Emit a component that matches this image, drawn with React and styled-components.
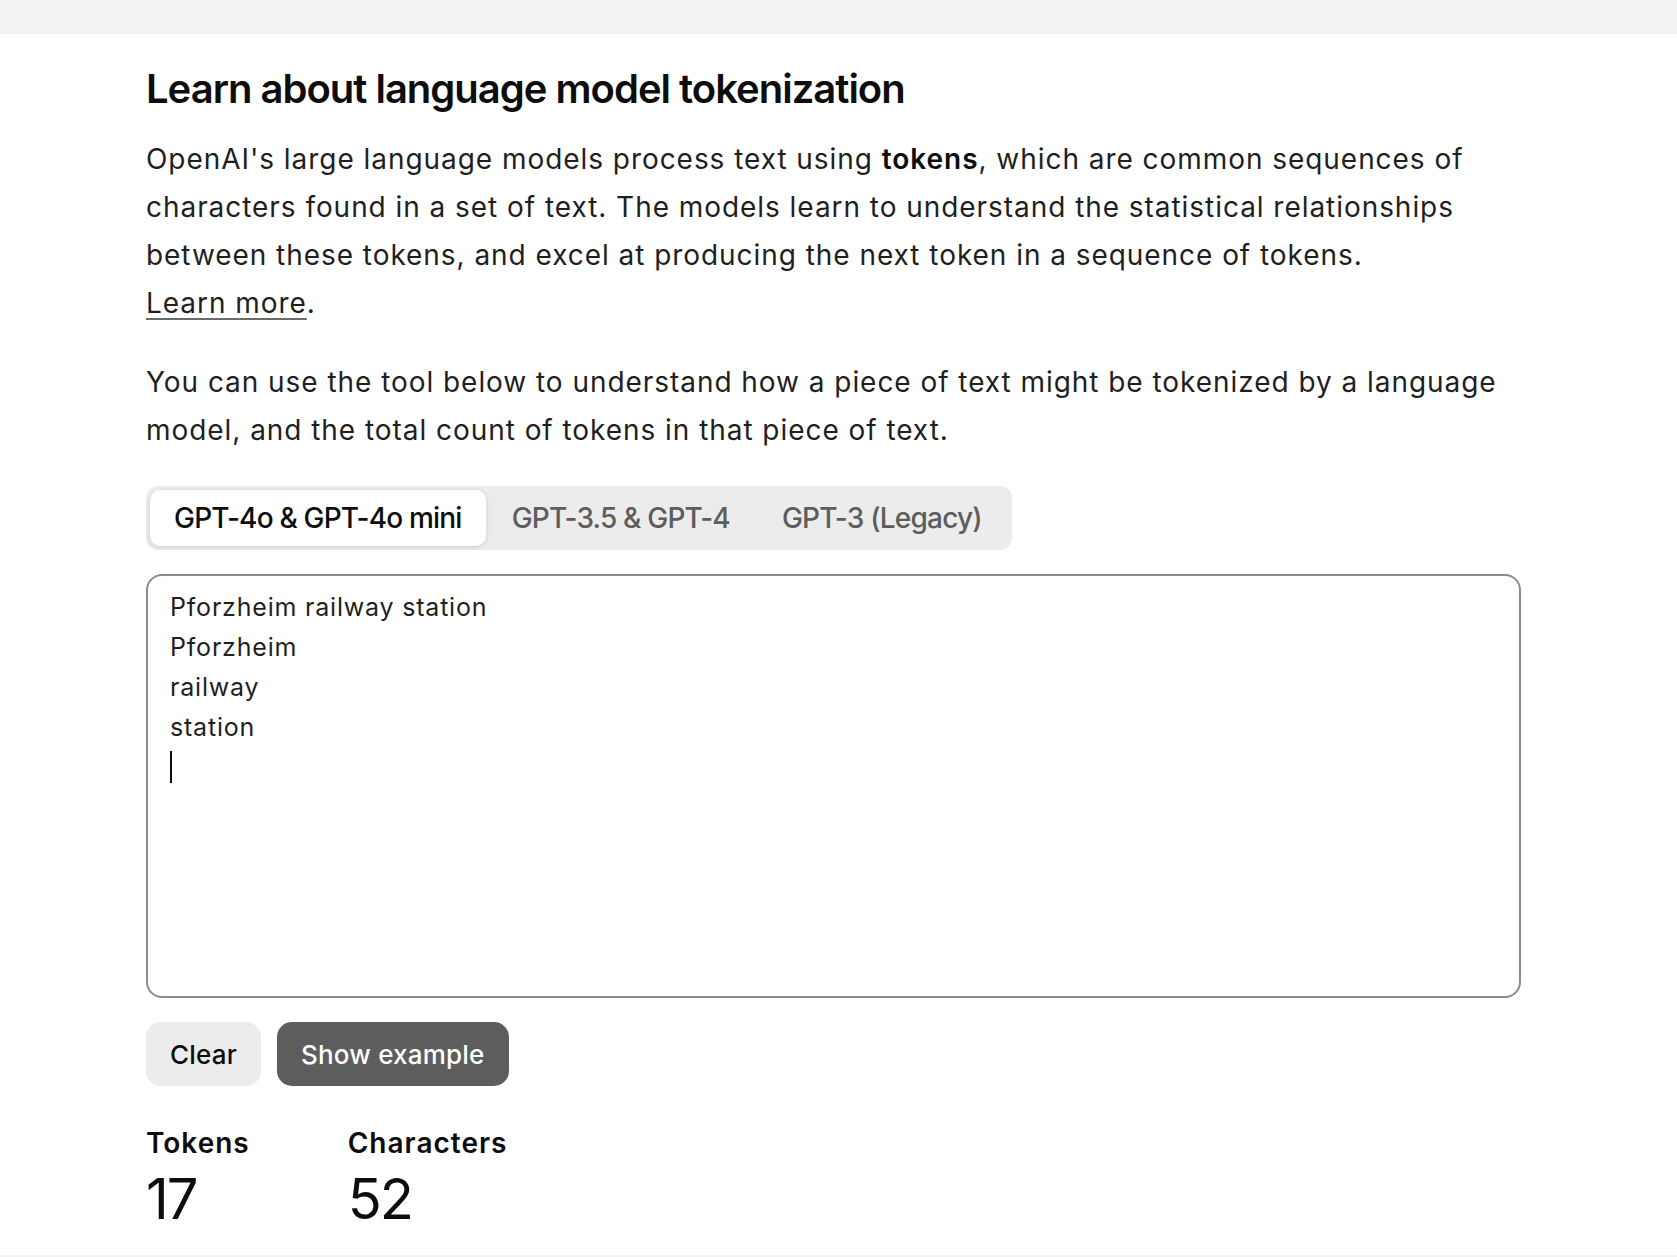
import React from 'react'
import styled, { createGlobalStyle } from 'styled-components'

const GlobalStyle = createGlobalStyle`
  html, body {
    margin: 0;
    padding: 0;
    background: #f3f3f3;
  }
  body {
    font-family: Inter, "Liberation Sans", sans-serif;
    color: #0d0d0d;
    -webkit-font-smoothing: antialiased;
  }
  * {
    box-sizing: border-box;
  }
`

const TABS = ['GPT-4o & GPT-4o mini', 'GPT-3.5 & GPT-4', 'GPT-3 (Legacy)']
const SAMPLE = 'Pforzheim railway station\nPforzheim\nrailway\nstation\n'

const App = () => {
  return (
    <>
      <GlobalStyle />
      <Page>
        <Panel>
          <Content>
            <Title>Learn about language model tokenization</Title>
            <Text>
              OpenAI's large language models process text using <strong>tokens</strong>, which are
              common sequences of characters found in a set of text. The models learn to understand
              the statistical relationships between these tokens, and excel at producing the next
              token in a sequence of tokens.
              <br />
              <TextLink href="#">Learn more</TextLink>.
            </Text>
            <Text>
              You can use the tool below to understand how a piece of text might be tokenized by a
              language model, and the total count of tokens in that piece of text.
            </Text>

            <TabList>
              {TABS.map((t, i) => (
                <Tab key={t} active={i === 0}>{t}</Tab>
              ))}
            </TabList>

            <Editor>
              {SAMPLE}
              <Caret />
            </Editor>

            <ButtonRow>
              <Button>Clear</Button>
              <Button primary>Show example</Button>
            </ButtonRow>

            <Stats>
              <Stat>
                <StatLabel>Tokens</StatLabel>
                <StatValue>17</StatValue>
              </Stat>
              <Stat>
                <StatLabel>Characters</StatLabel>
                <StatValue>52</StatValue>
              </Stat>
            </Stats>
          </Content>
        </Panel>
      </Page>
    </>
  )
}

export default App

// STYLES
const Page = styled.div`
  min-height: 1257px;
  padding-top: 33px;
`

const Panel = styled.main`
  background: #ffffff;
  border-top: 1px solid #ececec;
  padding: 31px 0 24px 146px;
`

const Content = styled.div`
  width: 1375px;
`

const Title = styled.h1`
  margin: 0 0 22px;
  font-size: 40px;
  line-height: 48px;
  font-weight: 600;
  letter-spacing: -1px;
  color: #0d0d0d;
`

const Text = styled.p`
  margin: 0 0 31px;
  font-size: 28px;
  line-height: 48px;
  font-weight: 400;
  letter-spacing: 0.95px;
  color: #1f1f1f;
  strong {
    font-weight: 600;
    color: #0d0d0d;
  }
`

const TextLink = styled.a`
  color: #1f1f1f;
  text-decoration: underline;
  text-decoration-color: #6b6b6b;
  text-decoration-thickness: 2px;
  text-underline-offset: 5px;
`

const TabList = styled.div`
  display: inline-flex;
  margin-top: 1px;
  padding: 4px;
  background: #ececec;
  border-radius: 12px;
`

const Tab = styled.button`
  height: 56px;
  padding: 0 ${p => (p.active ? '24px' : '26px')};
  border: none;
  border-radius: 10px;
  font-family: inherit;
  font-size: 28px;
  font-weight: 500;
  letter-spacing: -0.8px;
  cursor: pointer;
  background: ${p => (p.active ? '#ffffff' : 'transparent')};
  color: ${p => (p.active ? '#0d0d0d' : '#5d5d5d')};
  box-shadow: ${p => (p.active ? '0 1px 4px rgba(0, 0, 0, 0.14)' : 'none')};
`

const Editor = styled.div`
  margin-top: 24px;
  height: 424px;
  padding: 11px 22px;
  border: 2px solid #8c8c8c;
  border-radius: 16px;
  font-size: 25px;
  line-height: 40px;
  letter-spacing: 0.8px;
  color: #1f1f1f;
  white-space: pre-wrap;
`

const Caret = styled.span`
  display: inline-block;
  width: 2px;
  height: 32px;
  background: #0d0d0d;
  vertical-align: -7px;
`

const ButtonRow = styled.div`
  display: flex;
  gap: 16px;
  margin-top: 24px;
`

const Button = styled.button`
  height: 64px;
  padding: 0 24px;
  border: none;
  border-radius: 15px;
  font-family: inherit;
  font-size: 26px;
  font-weight: 500;
  letter-spacing: 0.2px;
  cursor: pointer;
  background: ${p => (p.primary ? '#5d5d5d' : '#ececec')};
  color: ${p => (p.primary ? '#ffffff' : '#0d0d0d')};
`

const Stats = styled.div`
  display: flex;
  gap: 98px;
  margin-top: 37px;
`

const Stat = styled.div`
  display: flex;
  flex-direction: column;
`

const StatLabel = styled.div`
  font-size: 28px;
  line-height: 40px;
  font-weight: 600;
  letter-spacing: 1px;
  color: #0d0d0d;
`

const StatValue = styled.div`
  margin-top: 4px;
  font-size: 56px;
  line-height: 64px;
  font-weight: 400;
  letter-spacing: -2px;
  color: #0d0d0d;
`
